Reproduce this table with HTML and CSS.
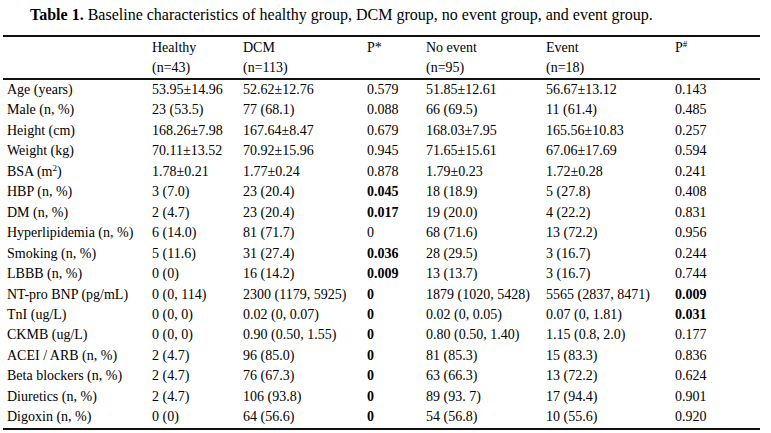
FILE: index.html
```html
<!DOCTYPE html>
<html>
<head>
<meta charset="utf-8">
<link rel="stylesheet" href="styles.css">
</head>
<body>
<div class="page">
  <p class="caption"><b>Table 1.</b> Baseline characteristics of healthy group, DCM group, no event group, and event group.</p>
  <table class="data">
    <colgroup>
      <col class="c1"><col class="c2"><col class="c3"><col class="c4"><col class="c5"><col class="c6"><col class="c7">
    </colgroup>
    <thead>
      <tr>
        <th></th>
        <th>Healthy<br>(n=43)</th>
        <th>DCM<br>(n=113)</th>
        <th>P*</th>
        <th>No event<br>(n=95)</th>
        <th>Event<br>(n=18)</th>
        <th>P<sup>#</sup></th>
      </tr>
    </thead>
    <tbody>
      <tr><td>Age (years)</td><td>53.95±14.96</td><td>52.62±12.76</td><td>0.579</td><td>51.85±12.61</td><td>56.67±13.12</td><td>0.143</td></tr>
      <tr><td>Male (n, %)</td><td>23 (53.5)</td><td>77 (68.1)</td><td>0.088</td><td>66 (69.5)</td><td>11 (61.4)</td><td>0.485</td></tr>
      <tr><td>Height (cm)</td><td>168.26±7.98</td><td>167.64±8.47</td><td>0.679</td><td>168.03±7.95</td><td>165.56±10.83</td><td>0.257</td></tr>
      <tr><td>Weight (kg)</td><td>70.11±13.52</td><td>70.92±15.96</td><td>0.945</td><td>71.65±15.61</td><td>67.06±17.69</td><td>0.594</td></tr>
      <tr><td>BSA (m<sup>2</sup>)</td><td>1.78±0.21</td><td>1.77±0.24</td><td>0.878</td><td>1.79±0.23</td><td>1.72±0.28</td><td>0.241</td></tr>
      <tr><td>HBP (n, %)</td><td>3 (7.0)</td><td>23 (20.4)</td><td class="sig">0.045</td><td>18 (18.9)</td><td>5 (27.8)</td><td>0.408</td></tr>
      <tr><td>DM (n, %)</td><td>2 (4.7)</td><td>23 (20.4)</td><td class="sig">0.017</td><td>19 (20.0)</td><td>4 (22.2)</td><td>0.831</td></tr>
      <tr><td>Hyperlipidemia (n, %)</td><td>6 (14.0)</td><td>81 (71.7)</td><td>0</td><td>68 (71.6)</td><td>13 (72.2)</td><td>0.956</td></tr>
      <tr><td>Smoking (n, %)</td><td>5 (11.6)</td><td>31 (27.4)</td><td class="sig">0.036</td><td>28 (29.5)</td><td>3 (16.7)</td><td>0.244</td></tr>
      <tr><td>LBBB (n, %)</td><td>0 (0)</td><td>16 (14.2)</td><td class="sig">0.009</td><td>13 (13.7)</td><td>3 (16.7)</td><td>0.744</td></tr>
      <tr><td>NT-pro BNP (pg/mL)</td><td>0 (0, 114)</td><td>2300 (1179, 5925)</td><td class="sig">0</td><td>1879 (1020, 5428)</td><td>5565 (2837, 8471)</td><td class="sig">0.009</td></tr>
      <tr><td>TnI (ug/L)</td><td>0 (0, 0)</td><td>0.02 (0, 0.07)</td><td class="sig">0</td><td>0.02 (0, 0.05)</td><td>0.07 (0, 1.81)</td><td class="sig">0.031</td></tr>
      <tr><td>CKMB (ug/L)</td><td>0 (0, 0)</td><td>0.90 (0.50, 1.55)</td><td class="sig">0</td><td>0.80 (0.50, 1.40)</td><td>1.15 (0.8, 2.0)</td><td>0.177</td></tr>
      <tr><td>ACEI / ARB (n, %)</td><td>2 (4.7)</td><td>96 (85.0)</td><td class="sig">0</td><td>81 (85.3)</td><td>15 (83.3)</td><td>0.836</td></tr>
      <tr><td>Beta blockers (n, %)</td><td>2 (4.7)</td><td>76 (67.3)</td><td class="sig">0</td><td>63 (66.3)</td><td>13 (72.2)</td><td>0.624</td></tr>
      <tr><td>Diuretics (n, %)</td><td>2 (4.7)</td><td>106 (93.8)</td><td class="sig">0</td><td>89 (93. 7)</td><td>17 (94.4)</td><td>0.901</td></tr>
      <tr><td>Digoxin (n, %)</td><td>0 (0)</td><td>64 (56.6)</td><td class="sig">0</td><td>54 (56.8)</td><td>10 (55.6)</td><td>0.920</td></tr>
    </tbody>
  </table>
</div>
</body>
</html>
```
FILE: styles.css
```css
html, body {
  margin: 0;
  padding: 0;
  background: #fff;
}
.page {
  padding: 5px 0 0 3px;
  font-family: "Liberation Serif", "Times New Roman", serif;
  color: #000;
}
.caption {
  margin: 0 0 10px 27px;
  font-size: 16px;
  line-height: 20px;
}
.data {
  width: 757px;
  table-layout: fixed;
  border-collapse: collapse;
  font-size: 14px;
  border-top: 2px solid #111;
  border-bottom: 2px solid #111;
}
.c1 { width: 145px; }
.c2 { width: 91px; }
.c3 { width: 124px; }
.c4 { width: 59px; }
.c5 { width: 120px; }
.c6 { width: 129px; }
.c7 { width: 89px; }
.data th {
  font-weight: normal;
  text-align: left;
  vertical-align: top;
  padding: 1px 0 1px 4px;
  line-height: 19.5px;
  border-bottom: 2px solid #111;
}
.data td {
  padding: 0 0 0 4px;
  line-height: 20.45px;
  white-space: nowrap;
}
.data sup {
  font-size: 9px;
  line-height: 0;
  vertical-align: 5px;
}
.sig {
  font-weight: bold;
}
```
